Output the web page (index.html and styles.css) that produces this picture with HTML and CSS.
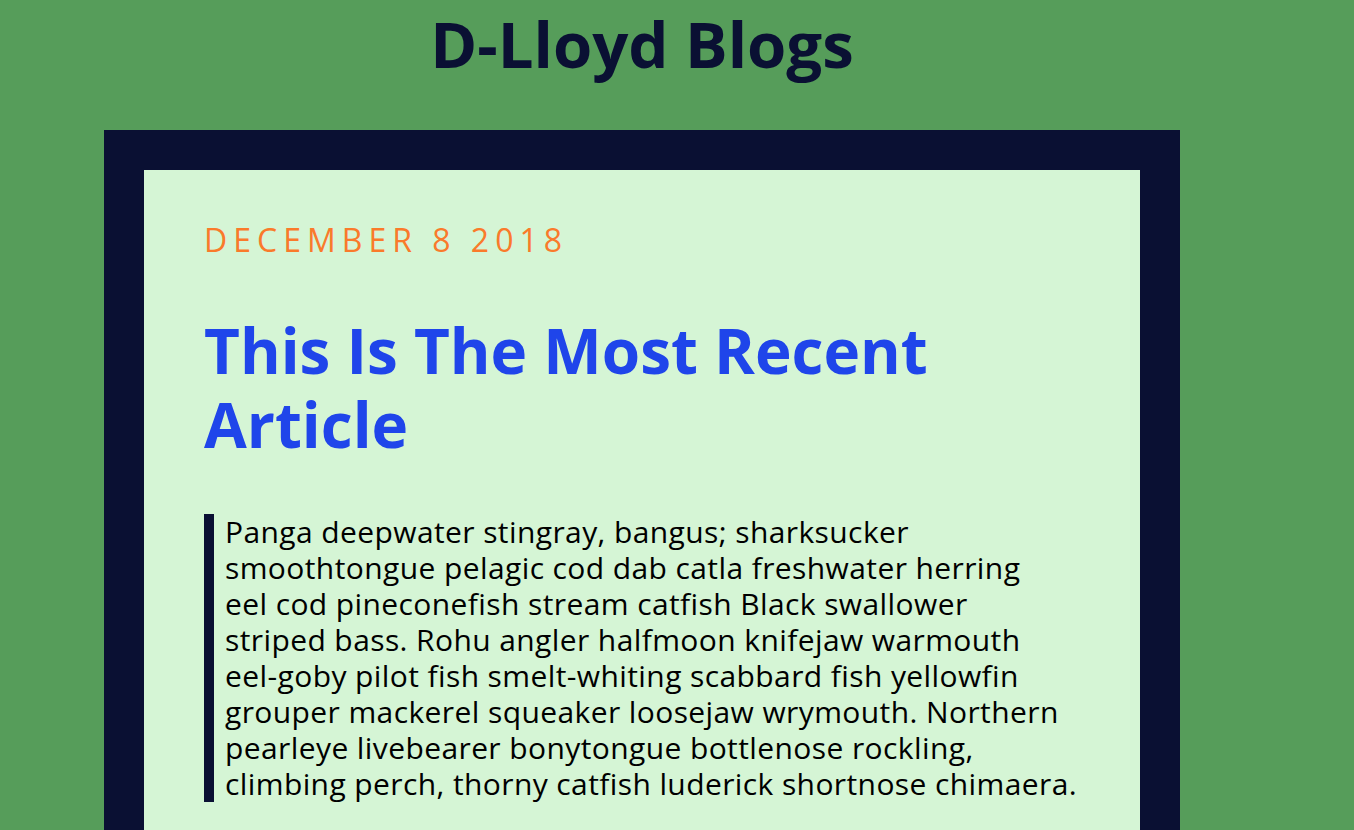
FILE: index.html
```html
<!DOCTYPE html>
<html lang="en">
<head>
<meta charset="utf-8">
<title>D-Lloyd Blogs</title>
<link rel="stylesheet" href="styles.css">
</head>
<body>
<div class="wrap">
  <header class="site-header">
    <h1 class="site-title">D-Lloyd Blogs</h1>
  </header>
  <article class="card">
    <p class="date">December 8 2018</p>
    <h2 class="post-title">This Is The Most Recent Article</h2>
    <blockquote class="excerpt">Panga deepwater stingray, bangus; sharksucker<br>
smoothtongue pelagic cod dab catla freshwater herring<br>
eel cod pineconefish stream catfish Black swallower<br>
striped bass. Rohu angler halfmoon knifejaw warmouth<br>
eel-goby pilot fish smelt-whiting scabbard fish yellowfin<br>
grouper mackerel squeaker loosejaw wrymouth. Northern<br>
pearleye livebearer bonytongue bottlenose rockling,<br>
climbing perch, thorny catfish luderick shortnose chimaera.</blockquote>
  </article>
</div>
</body>
</html>
```
FILE: styles.css
```css
html, body {
  margin: 0;
  padding: 0;
}
body {
  background: #569d5a;
  font-family: "Open Sans", sans-serif;
  overflow: hidden;
  height: 830px;
}
.wrap {
  width: 1076px;
  margin-left: 104px;
}
.site-header {
  height: 130px;
}
.site-title {
  margin: 0;
  padding-top: 8px;
  text-align: center;
  font-size: 63.5px;
  line-height: 72px;
  font-weight: 700;
  color: #0a1033;
}
.card {
  border: 40px solid #0a1033;
  background: #d5f5d5;
  padding: 48px 60px 120px;
}
.date {
  margin: 0;
  font-size: 32px;
  line-height: 44px;
  letter-spacing: 6px;
  text-transform: uppercase;
  color: #fa7a2b;
}
.post-title {
  margin: 51px 0 0;
  font-size: 62px;
  line-height: 74px;
  font-weight: 700;
  color: #1f45ea;
}
.excerpt {
  margin: 53px -40px 0 0;
  border-left: 10px solid #0a1033;
  padding-left: 11px;
  font-size: 30px;
  line-height: 36px;
  letter-spacing: 0.4px;
  color: #000;
}
```
